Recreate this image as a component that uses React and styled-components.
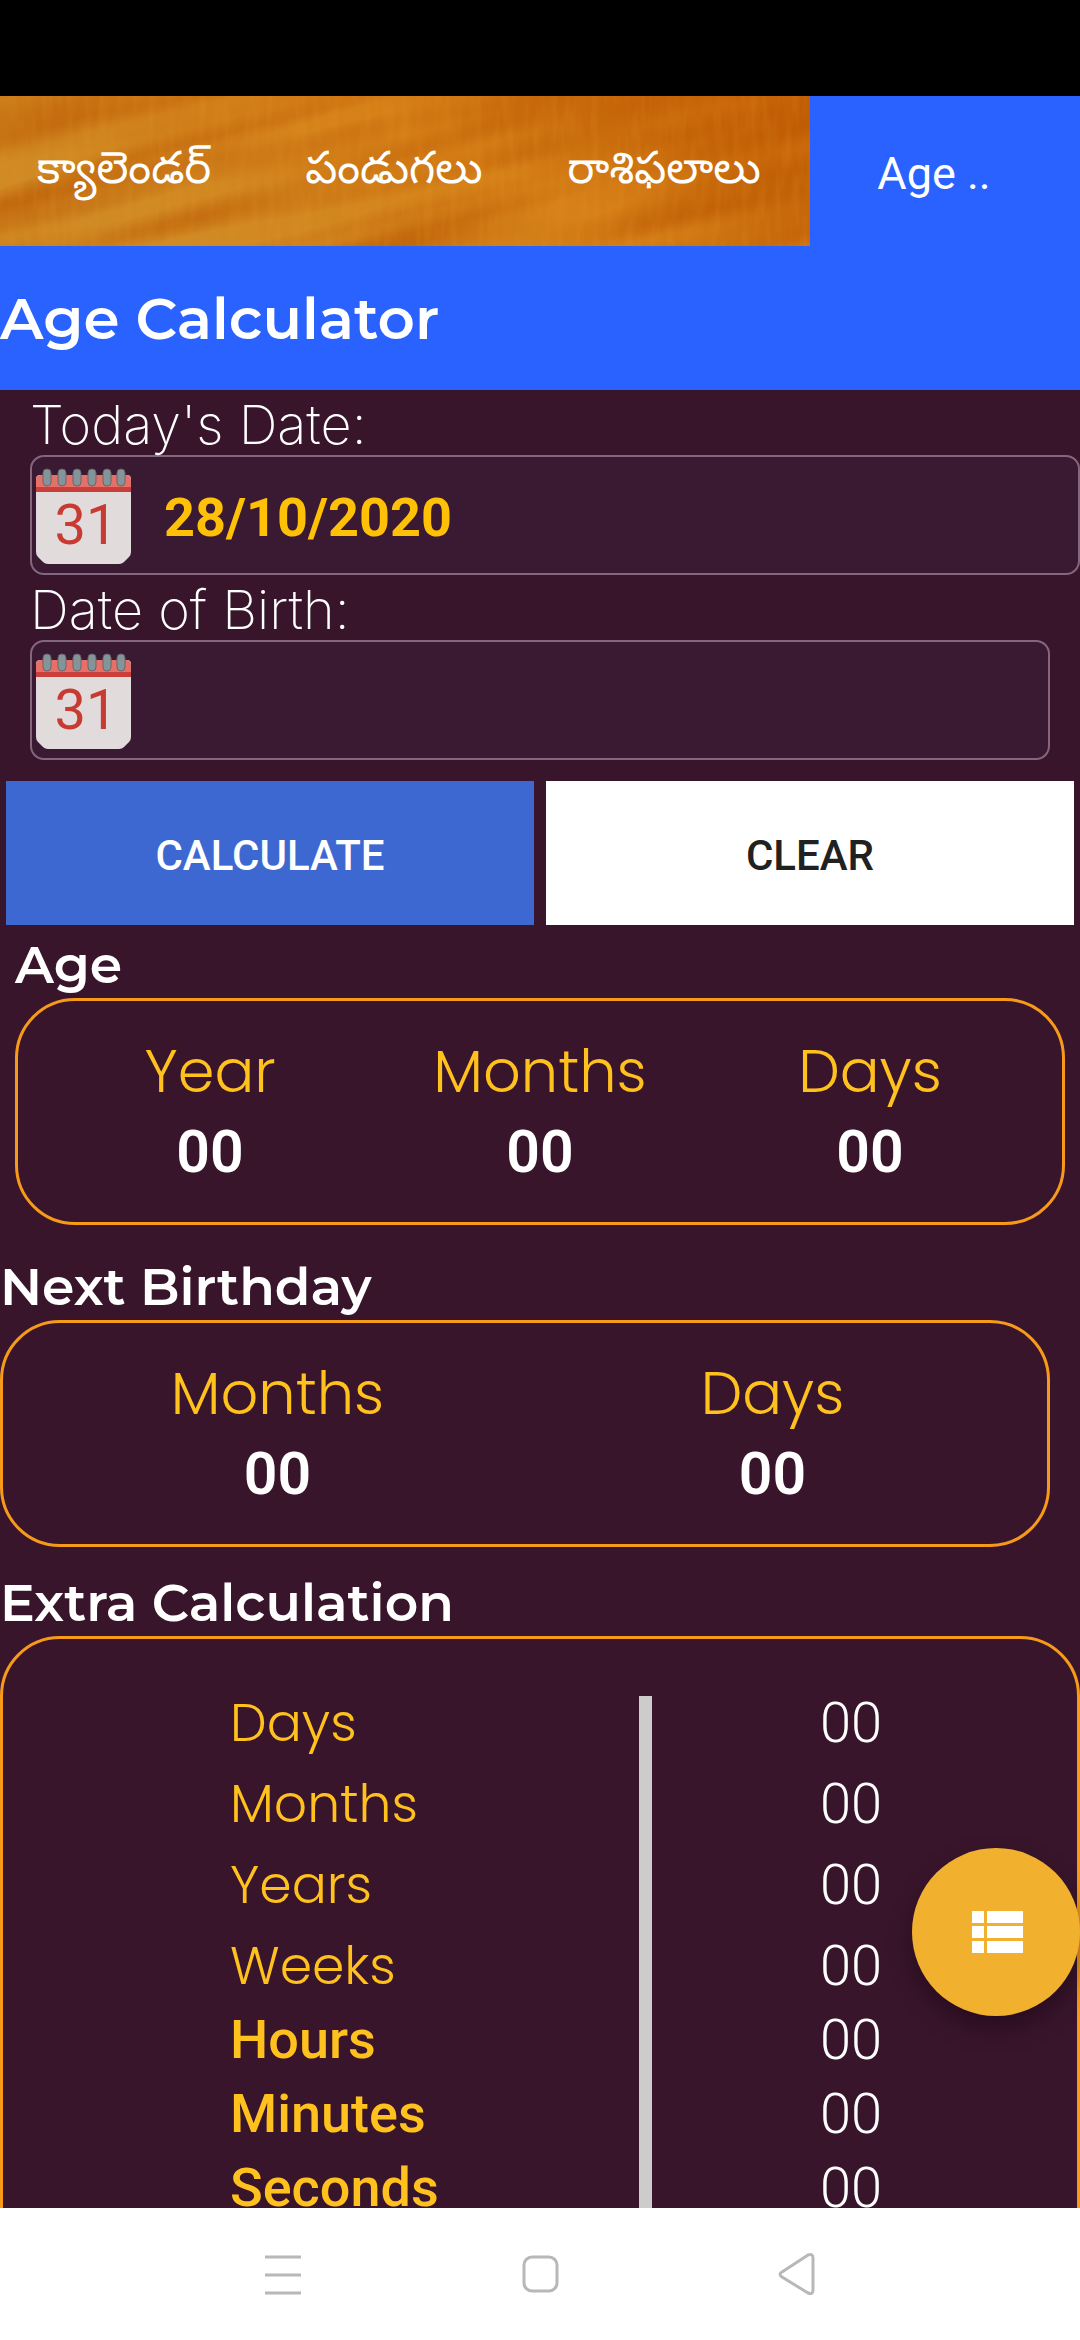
import React, { useState } from 'react'
import styled, { createGlobalStyle } from 'styled-components'

const GlobalStyle = createGlobalStyle`
    * {
        box-sizing: border-box;
    }
    body {
        margin: 0;
        background: #39152b;
        font-family: Roboto, "Liberation Sans", sans-serif;
    }
`
const Screen = styled.div`
    height: 100vh;
    display: flex;
    flex-direction: column;
    color: white;
    overflow: hidden;
`
const StatusBar = styled.div`
    flex: 0 0 96px;
    background: black;
`
const Tabs = styled.nav`
    flex: 0 0 150px;
    display: grid;
    grid-template-columns: repeat(4, 1fr);
    position: relative;
    .wood {
        position: absolute;
        inset: 0;
        width: 75%;
        height: 100%;
    }
`
const Tab = styled.a`
    display: flex;
    align-items: center;
    justify-content: center;
    position: relative;
    padding: 4px 22px 0 0;
    color: white;
    text-decoration: none;
    white-space: nowrap;
    font-family: Roboto, "Noto Sans Telugu", sans-serif;
    font-size: 45px;
    background: ${p => p.$active ? '#2962ff' : 'transparent'};
`
const Header = styled.header`
    flex: 0 0 144px;
    display: flex;
    align-items: center;
    background: #2962ff;
    h1 {
        margin: 0;
        font-family: Montserrat, Inter, sans-serif;
        font-size: 58px;
        font-weight: 600;
    }
`
const Content = styled.main`
    flex: 1;
    min-height: 0;
    overflow-y: auto;
    scrollbar-width: none;
`
const Field = styled.div`
    padding-left: 30px;
    padding-right: ${p => p.$wide ? 0 : 30}px;
    label {
        display: block;
        height: 65px;
        line-height: 70px;
        font-family: Inter, sans-serif;
        font-size: 54px;
        font-weight: 200;
    }
    .box {
        height: 120px;
        display: flex;
        align-items: center;
        border: 2px solid #84677f;
        border-radius: 14px;
        background: #391a32;
    }
    svg {
        flex: none;
        margin-left: 4px;
    }
    input {
        flex: 1;
        min-width: 0;
        height: 100%;
        padding: 4px 32px 0;
        border: none;
        outline: none;
        background: transparent;
        color: #ffc107;
        font-family: Roboto, sans-serif;
        font-size: 54px;
        font-weight: 700;
    }
`
const Buttons = styled.div`
    display: flex;
    gap: 12px;
    padding: 21px 6px 0;
`
const Button = styled.button`
    flex: 1;
    height: 144px;
    padding: 4px 0 0;
    border: none;
    background: ${p => p.$primary ? '#3e68d1' : 'white'};
    color: ${p => p.$primary ? 'white' : '#212121'};
    font-family: Roboto, sans-serif;
    font-size: 42px;
    font-weight: 500;
`
const Section = styled.section`
    padding: 0 ${p => p.$right}px 0 ${p => p.$left}px;
    margin-bottom: ${p => p.$gap}px;
    h2 {
        margin: 0;
        height: 73px;
        line-height: 80px;
        font-family: Montserrat, Inter, sans-serif;
        font-size: 52px;
        font-weight: 600;
    }
`
const Panel = styled.div`
    border: 3px solid #f79a1a;
    border-radius: 60px;
`
const Results = styled.dl`
    display: flex;
    margin: 0;
    padding: 33px 27px 28px;
    text-align: center;
    div {
        flex: 1;
    }
    dt {
        line-height: 76px;
        color: #ffc11e;
        font-family: Poppins, Inter, sans-serif;
        font-size: 59px;
        font-weight: 300;
    }
    dd {
        margin: 0;
        line-height: 84px;
        font-size: 59px;
        font-weight: 600;
    }
`
const ExtraPanel = styled(Panel)`
    padding: 57px 27px;
`
const ExtraTable = styled.table`
    width: 100%;
    border-spacing: 0;
    tbody {
        vertical-align: top;
    }
`
const ExtraRow = styled.tr`
    height: ${p => p.$tight ? 74 : 81}px;
    line-height: 54px;
    th {
        width: 61%;
        padding: 0 0 0 200px;
        border-right: 13px solid #cccccc;
        color: #ffc11e;
        text-align: left;
        font-family: ${p => p.$strong ? 'Roboto' : 'Poppins, Inter'}, sans-serif;
        font-size: ${p => p.$strong ? 54 : 52}px;
        font-weight: ${p => p.$strong ? 500 : 300};
    }
    td {
        padding: 0;
        text-align: center;
        font-family: Roboto, sans-serif;
        font-size: 56px;
        font-weight: 300;
    }
`
const MenuButton = styled.button`
    position: fixed;
    right: 0;
    bottom: 324px;
    width: 168px;
    height: 168px;
    display: grid;
    place-content: center;
    padding: 0;
    border: none;
    border-radius: 50%;
    background: #f2b02f;
    box-shadow: 0 12px 24px rgba(20, 0, 20, 0.45);
`
const NavBar = styled.nav`
    flex: 0 0 132px;
    display: flex;
    align-items: center;
    justify-content: center;
    gap: 185px;
    background: white;
    button {
        display: grid;
        padding: 0;
        border: none;
        background: none;
    }
`

const tabs = ['క్యాలెండర్', 'పండుగలు', 'రాశిఫలాలు', 'Age ..']
const extras = ['Days', 'Months', 'Years', 'Weeks', 'Hours', 'Minutes', 'Seconds']

function Wood() {
    return (
        <svg className="wood" viewBox="0 0 810 150" preserveAspectRatio="none" aria-hidden="true">
            <defs>
                <linearGradient id="woodBase" x1="0" x2="1" y1="0.4" y2="0">
                    <stop offset="0" stopColor="#d08a24" />
                    <stop offset="0.5" stopColor="#d68018" />
                    <stop offset="0.8" stopColor="#ca6a0b" />
                    <stop offset="1" stopColor="#c66006" />
                </linearGradient>
                <filter id="grain" x="0" y="0" width="100%" height="100%" colorInterpolationFilters="sRGB">
                    <feTurbulence type="fractalNoise" baseFrequency="0.003 0.025" numOctaves="2" seed="4" />
                    <feColorMatrix values="0 0 0 0 0.72  0 0 0 0 0.33  0 0 0 0 0  1.5 0 0 0 -0.55" />
                </filter>
                <filter id="fibre" x="0" y="0" width="100%" height="100%" colorInterpolationFilters="sRGB">
                    <feTurbulence type="fractalNoise" baseFrequency="0.12 0.02" numOctaves="2" seed="9" />
                    <feColorMatrix values="0 0 0 0 0.9  0 0 0 0 0.6  0 0 0 0 0.15  0.4 0 0 0 -0.16" />
                </filter>
            </defs>
            <rect width="810" height="150" fill="url(#woodBase)" />
            <rect x="-100" y="-200" width="1100" height="600" filter="url(#grain)" transform="rotate(-14 400 75)" />
            <rect width="810" height="150" filter="url(#fibre)" />
        </svg>
    )
}

function CalendarIcon() {
    return (
        <svg width="96" height="108" viewBox="0 -8 96 108" aria-hidden="true">
            <path d="M0 10q0-4 4-4h87q4 0 4 4v73q0 3-2 5l-5 5q-2 2-5 2H12q-3 0-5-2l-5-5q-2-2-2-5z" fill="#e1dbdc" />
            <path d="M0 23V11q0-5 5-5h85q5 0 5 5v12z" fill="#e66f68" />
            <path d="M0 18h95v5H0z" fill="#c9403a" />
            {[11, 26, 41, 56, 71, 85].map(x => (
                <rect key={x} x={x - 4} y="0" width="8" height="17" rx="4" fill="#84959a" stroke="#6b6569" />
            ))}
            <text x="50" y="75" textAnchor="middle" fontFamily="Roboto, sans-serif" fontSize="56" fill="#c83b32">31</text>
        </svg>
    )
}

function DateField({ id, label, value, onChange, wide }) {
    return (
        <Field $wide={wide}>
            <label htmlFor={id}>{label}</label>
            <div className="box">
                <CalendarIcon />
                <input id={id} value={value} onChange={e => onChange(e.target.value)} />
            </div>
        </Field>
    )
}

function ResultPanel({ items }) {
    return (
        <Panel>
            <Results>
                {items.map(item => (
                    <div key={item}>
                        <dt>{item}</dt>
                        <dd>00</dd>
                    </div>
                ))}
            </Results>
        </Panel>
    )
}

export default function App() {
    const [today, setToday] = useState('28/10/2020')
    const [birth, setBirth] = useState('')

    return (
        <Screen>
            <GlobalStyle />
            <StatusBar />
            <Tabs>
                <Wood />
                {tabs.map((tab, i) => (
                    <Tab key={tab} href="#" $active={i === 3}>{tab}</Tab>
                ))}
            </Tabs>
            <Header>
                <h1>Age Calculator</h1>
            </Header>
            <Content>
                <DateField id="today" label="Today's Date:" value={today} onChange={setToday} wide />
                <DateField id="birth" label="Date of Birth:" value={birth} onChange={setBirth} />
                <Buttons>
                    <Button $primary>CALCULATE</Button>
                    <Button onClick={() => setBirth('')}>CLEAR</Button>
                </Buttons>
                <Section $left={15} $right={15} $gap={22}>
                    <h2>Age</h2>
                    <ResultPanel items={['Year', 'Months', 'Days']} />
                </Section>
                <Section $left={0} $right={30} $gap={16}>
                    <h2>Next Birthday</h2>
                    <ResultPanel items={['Months', 'Days']} />
                </Section>
                <Section $left={0} $right={0} $gap={0}>
                    <h2>Extra Calculation</h2>
                    <ExtraPanel>
                        <ExtraTable>
                            <tbody>
                                {extras.map((name, i) => (
                                    <ExtraRow key={name} $strong={i > 3} $tight={i > 2}>
                                        <th scope="row">{name}</th>
                                        <td>00</td>
                                    </ExtraRow>
                                ))}
                            </tbody>
                        </ExtraTable>
                    </ExtraPanel>
                </Section>
            </Content>
            <MenuButton aria-label="Menu">
                <svg width="72" height="72" viewBox="0 0 24 24" fill="white">
                    <path d="M4 14h4v-4H4v4zm0 5h4v-4H4v4zM4 9h4V5H4v4zm5 5h12v-4H9v4zm0 5h12v-4H9v4zM9 5v4h12V5H9z" />
                </svg>
            </MenuButton>
            <NavBar>
                <button aria-label="Recent apps">
                    <svg width="72" height="72" viewBox="0 0 72 72" stroke="#b8b8b8" strokeWidth="3">
                        <path d="M18 19h36M18 37h36M18 55h36" />
                    </svg>
                </button>
                <button aria-label="Home">
                    <svg width="72" height="72" viewBox="0 0 72 72" fill="none" stroke="#b8b8b8" strokeWidth="3">
                        <rect x="20" y="19" width="33" height="34" rx="8" />
                    </svg>
                </button>
                <button aria-label="Back">
                    <svg width="72" height="72" viewBox="0 0 72 72" fill="none" stroke="#b8b8b8" strokeWidth="3" strokeLinejoin="round">
                        <path d="M21 34L47 17Q52 15 52 20V52Q52 57 47 55L21 39Q17 36 21 34Z" />
                    </svg>
                </button>
            </NavBar>
        </Screen>
    )
}
